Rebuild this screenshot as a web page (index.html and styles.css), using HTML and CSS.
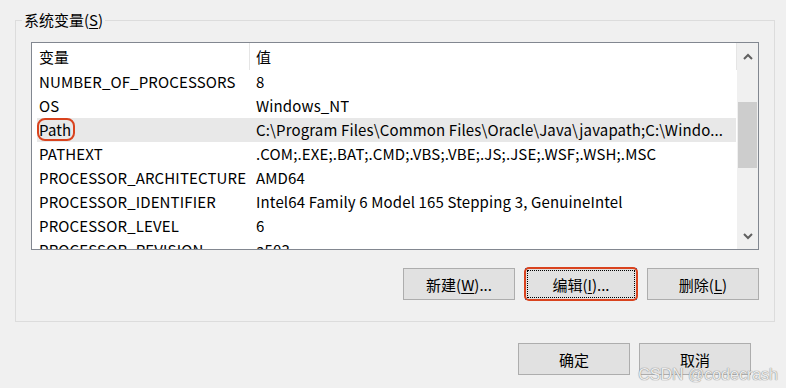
FILE: index.html
```html
<!DOCTYPE html>
<html lang="zh-CN">
<head>
<meta charset="utf-8">
<title>系统变量</title>
<link rel="stylesheet" href="styles.css">
</head>
<body>
<div class="dialog">
  <fieldset class="group">
    <legend class="group-label">系统变量(<u>S</u>)</legend>
    <div class="listbox">
      <div class="list">
        <div class="list-head">
          <div class="head-name">变量</div>
          <div class="head-val">值</div>
        </div>
        <div class="rows">
          <div class="row"><span class="c1">NUMBER_OF_PROCESSORS</span><span class="c2">8</span></div>
          <div class="row"><span class="c1">OS</span><span class="c2">Windows_NT</span></div>
          <div class="row selected"><span class="c1"><span class="mark">Path</span></span><span class="c2">C:\Program Files\Common Files\Oracle\Java\javapath;C:\Windo...</span></div>
          <div class="row"><span class="c1">PATHEXT</span><span class="c2">.COM;.EXE;.BAT;.CMD;.VBS;.VBE;.JS;.JSE;.WSF;.WSH;.MSC</span></div>
          <div class="row"><span class="c1">PROCESSOR_ARCHITECTURE</span><span class="c2">AMD64</span></div>
          <div class="row"><span class="c1">PROCESSOR_IDENTIFIER</span><span class="c2">Intel64 Family 6 Model 165 Stepping 3, GenuineIntel</span></div>
          <div class="row"><span class="c1">PROCESSOR_LEVEL</span><span class="c2">6</span></div>
          <div class="row"><span class="c1">PROCESSOR_REVISION</span><span class="c2">a503</span></div>
        </div>
      </div>
      <div class="scrollbar">
        <div class="sb-arrow">
          <svg width="10" height="7" viewBox="0 0 10 7"><path d="M1 6 L5 2 L9 6" fill="none" stroke="#606060" stroke-width="2"/></svg>
        </div>
        <div class="sb-track">
          <div class="sb-thumb"></div>
        </div>
        <div class="sb-arrow">
          <svg width="10" height="7" viewBox="0 0 10 7"><path d="M1 1 L5 5 L9 1" fill="none" stroke="#606060" stroke-width="2"/></svg>
        </div>
      </div>
    </div>
    <div class="btn-row">
      <button class="btn">新建(<u>W</u>)...</button>
      <button class="btn focused">编辑(<u>I</u>)...</button>
      <button class="btn">删除(<u>L</u>)</button>
    </div>
  </fieldset>
  <div class="footer">
    <button class="btn">确定</button>
    <button class="btn">取消</button>
  </div>
  <div class="watermark">CSDN @codecrash</div>
</div>
</body>
</html>
```
FILE: styles.css
```css
* { box-sizing: border-box; }
html, body {
  margin: 0;
  padding: 0;
  background: #f0f0f0;
}
body {
  font-family: "Microsoft YaHei UI", "Noto Sans CJK SC", sans-serif;
  font-size: 15px;
  color: #000;
}
.dialog {
  position: relative;
  width: 786px;
  height: 388px;
  padding-top: 10px;
  overflow: hidden;
}
.group {
  margin: 0 11px 0 15px;
  border: 1px solid #dcdcdc;
  padding: 12px 15px 21px 15px;
  min-width: 0;
}
.group-label {
  margin-left: -9px;
  padding: 0 2px;
  line-height: 20px;
  height: 20px;
}
u { text-decoration: underline; text-underline-offset: 2px; }

.listbox {
  display: flex;
  height: 208px;
  border: 1px solid #828790;
  background: #fff;
}
.list {
  width: 705px;
  overflow: hidden;
}
.list-head {
  display: flex;
  height: 27px;
  align-items: stretch;
}
.head-name, .head-val {
  display: flex;
  align-items: center;
  border-right: 1px solid #e5e5e5;
  line-height: 20px;
}
.head-name { width: 218px; padding-left: 7px; }
.head-val { width: 487px; padding-left: 6px; }

.row {
  display: flex;
  height: 24px;
  align-items: center;
  margin-left: 5px;
  width: 699px;
  white-space: nowrap;
  line-height: 20px;
  letter-spacing: 0.14px;
}
.row.selected { background: #e8e8e8; }
.c1 { width: 212px; padding-left: 2px; flex: none; }
.c2 { padding-left: 7px; overflow: hidden; }
.mark { position: relative; }
.mark::after {
  content: "";
  position: absolute;
  left: -2px;
  right: -4px;
  top: -1px;
  bottom: -1px;
  border: 2px solid #d9431e;
  border-radius: 8px;
}

.scrollbar {
  width: 21px;
  background: #f0f0f0;
  display: flex;
  flex-direction: column;
}
.sb-arrow {
  height: 26px;
  display: flex;
  align-items: center;
  justify-content: center;
}
.sb-track { flex: 1; padding-top: 33px; }
.sb-thumb {
  margin: 0 1px;
  height: 66px;
  background: #cdcdcd;
}

.btn-row {
  display: flex;
  justify-content: flex-end;
  gap: 10px;
  margin-top: 18px;
}
.btn {
  width: 112px;
  height: 32px;
  background: #e1e1e1;
  border: 1px solid #adadad;
  font-family: inherit;
  font-size: 15px;
  color: #000;
  padding: 0;
  position: relative;
}
.btn.focused {
  border-color: #0078d7;
  outline: 1px dotted #000;
  outline-offset: -3px;
}
.btn.focused::after {
  content: "";
  position: absolute;
  inset: -2px;
  border: 2px solid #d9431e;
  border-radius: 5px;
}
.footer {
  display: flex;
  justify-content: flex-end;
  gap: 9px;
  margin-top: 21px;
  padding-right: 35px;
}
.watermark {
  position: absolute;
  right: 8px;
  bottom: 4px;
  font-family: "Liberation Sans", sans-serif;
  font-size: 16px;
  color: #ececec;
  text-shadow: 0 0 1px #8a8a8a, 0 0 1px #8a8a8a;
}
```
